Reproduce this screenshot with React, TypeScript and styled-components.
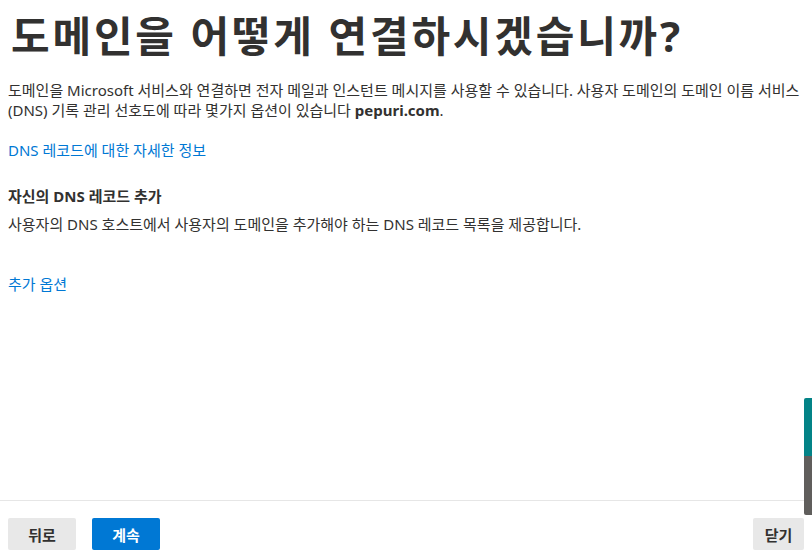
import styled, { createGlobalStyle } from "styled-components";

const GlobalStyle = createGlobalStyle`
  html, body {
    margin: 0;
    padding: 0;
    background: #fff;
  }
  body {
    font-family: "Noto Sans", "Noto Sans CJK KR", sans-serif;
    color: #323130;
  }
`;

function App() {
  return (
    <>
      <GlobalStyle />
      <Page>
        <Content>
          <Title>도메인을 어떻게 연결하시겠습니까?</Title>
          <Paragraph>
            도메인을 Microsoft 서비스와 연결하면 전자 메일과 인스턴트 메시지를 사용할 수 있습니다. 사용자 도메인의 도메인 이름 서비스
            (DNS) 기록 관리 선호도에 따라 몇가지 옵션이 있습니다 <strong>pepuri.com</strong>.
          </Paragraph>
          <Link href="#">DNS 레코드에 대한 자세한 정보</Link>
          <Section>
            <SectionTitle>자신의 DNS 레코드 추가</SectionTitle>
            <Paragraph>사용자의 DNS 호스트에서 사용자의 도메인을 추가해야 하는 DNS 레코드 목록을 제공합니다.</Paragraph>
          </Section>
          <MoreLink href="#">추가 옵션</MoreLink>
        </Content>
        <Footer>
          <Button>뒤로</Button>
          <Button primary>계속</Button>
          <Spacer />
          <Button compact>닫기</Button>
        </Footer>
        {/* floating feedback tab on the right edge */}
        <SideTab>
          <TabPart color="#038387" size={58} />
          <TabPart color="#605e5c" size={59} />
        </SideTab>
      </Page>
    </>
  );
}

const Page = styled.div`
  position: relative;
  height: 100vh;
  display: flex;
  flex-direction: column;
  box-sizing: border-box;
`;

const Content = styled.div`
  flex: 1;
  padding: 0 8px;
`;

const Title = styled.h1`
  margin: 10px 0 0 0;
  padding-left: 3px;
  font-size: 42px;
  line-height: 52px;
  font-weight: 700;
  color: #323130;
  letter-spacing: 2.8px;
  white-space: nowrap;
`;

const Paragraph = styled.p`
  margin: 18px 0 0 0;
  font-size: 15px;
  line-height: 20px;
  color: #323130;

  strong {
    font-weight: 700;
  }
`;

const Link = styled.a`
  display: inline-block;
  margin-top: 20px;
  font-size: 15px;
  line-height: 20px;
  color: #0078d4;
  text-decoration: none;
`;

const Section = styled.div`
  margin-top: 25px;

  ${Paragraph} {
    margin-top: 8px;
  }
`;

const SectionTitle = styled.div`
  font-size: 15px;
  line-height: 20px;
  font-weight: 700;
  color: #323130;
`;

const MoreLink = styled(Link)`
  margin-top: 40px;
`;

const Footer = styled.div`
  display: flex;
  align-items: center;
  gap: 16px;
  padding: 17px 0 6px 8px;
  margin-right: 8px;
  border-top: 1px solid #e6e6e6;
`;

const Spacer = styled.div`
  flex: 1;
`;

const Button = styled.button<{ primary?: boolean; compact?: boolean }>`
  height: 32px;
  min-width: ${(p) => (p.compact ? "51px" : "68px")};
  padding: 0 ${(p) => (p.compact ? "10px" : "16px")};
  border: none;
  border-radius: 2px;
  font-family: "Noto Sans", "Noto Sans CJK KR", sans-serif;
  font-size: 15px;
  font-weight: 600;
  background: ${(p) => (p.primary ? "#0078d4" : "#e8e8e8")};
  color: ${(p) => (p.primary ? "#ffffff" : "#323130")};
  cursor: pointer;
`;

const SideTab = styled.div`
  position: absolute;
  right: 0;
  top: 398px;
  width: 8px;
  display: flex;
  flex-direction: column;
  border-radius: 2px 0 0 2px;
  overflow: hidden;
`;

const TabPart = styled.div<{ color: string; size: number }>`
  height: ${(p) => p.size}px;
  background: ${(p) => p.color};
`;

export default App;
